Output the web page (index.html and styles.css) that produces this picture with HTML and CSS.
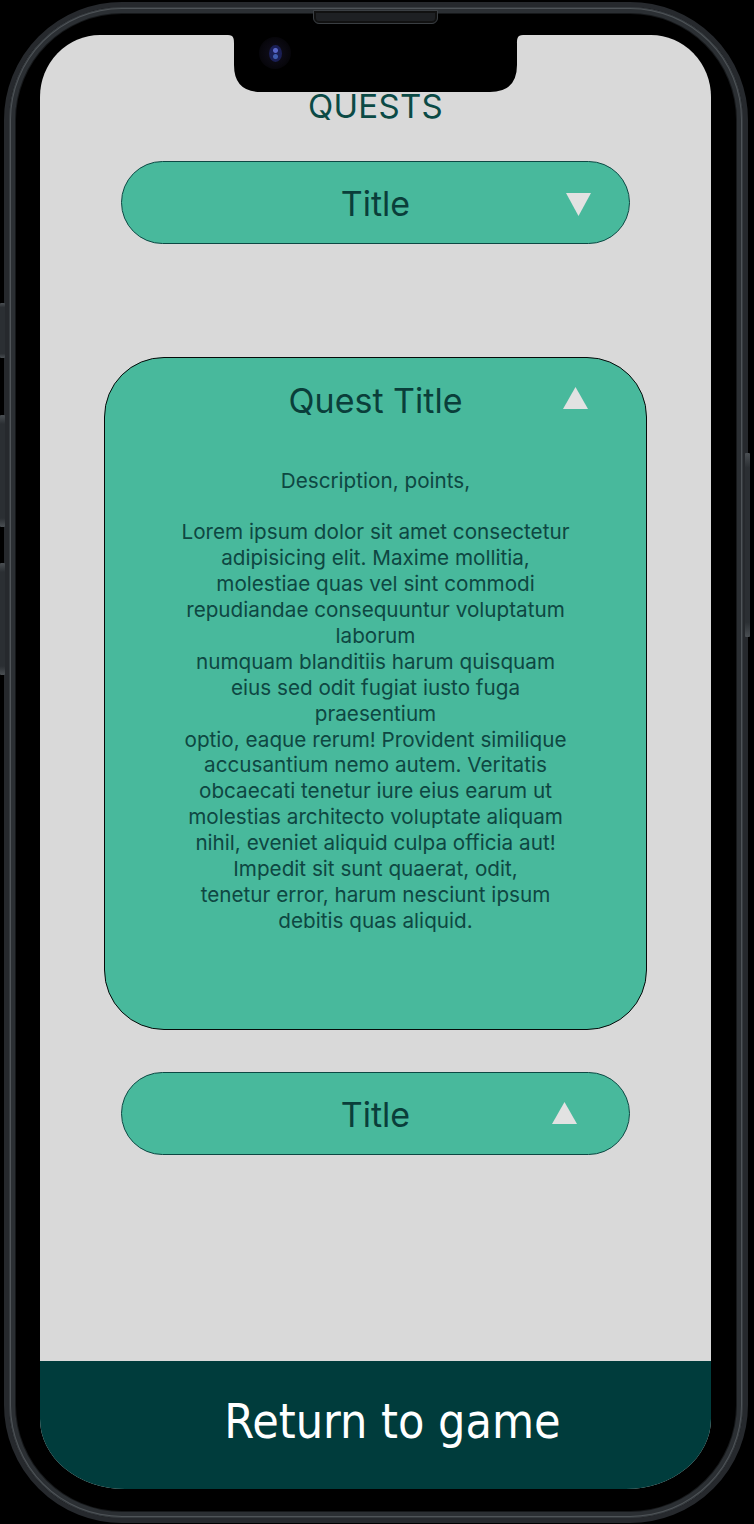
FILE: index.html
```html
<!DOCTYPE html>
<html lang="en">
<head>
<meta charset="utf-8">
<title>Quests</title>
<link rel="stylesheet" href="styles.css">
</head>
<body>
<div class="phone">
  <span class="side-btn side-btn--l1"></span>
  <span class="side-btn side-btn--l2"></span>
  <span class="side-btn side-btn--l3"></span>
  <span class="side-btn side-btn--r1"></span>
  <span class="speaker"></span>
  <div class="screen">
    <svg class="notch" width="295" height="57" viewBox="0 0 295 57" aria-hidden="true">
      <path d="M0 0 H295 C289 0 289 4 289 9 V30 Q289 57 262 57 H33 Q6 57 6 30 V9 C6 4 6 0 0 0 Z" fill="#000"/>
    </svg>
    <span class="camera"><span class="lens"></span></span>

    <h1 class="title">QUESTS</h1>

    <div class="pill pill--down">
      <span></span>
      <span class="pill-label">Title</span>
      <svg class="tri" width="25" height="23" viewBox="0 0 25 23"><polygon points="0,0 25,0 12.5,23" fill="#e2e2e2"/></svg>
    </div>

    <div class="card">
      <div class="card-head">
        <span></span>
        <span class="card-title">Quest Title</span>
        <svg class="tri tri--card" width="25" height="22" viewBox="0 0 25 22"><polygon points="12.5,0 25,22 0,22" fill="#e2e2e2"/></svg>
      </div>
      <p class="desc">Description, points,<br><br>Lorem ipsum dolor sit amet consectetur<br>adipisicing elit. Maxime mollitia,<br>molestiae quas vel sint commodi<br>repudiandae consequuntur voluptatum<br>laborum<br>numquam blanditiis harum quisquam<br>eius sed odit fugiat iusto fuga<br>praesentium<br>optio, eaque rerum! Provident similique<br>accusantium nemo autem. Veritatis<br>obcaecati tenetur iure eius earum ut<br>molestias architecto voluptate aliquam<br>nihil, eveniet aliquid culpa officia aut!<br>Impedit sit sunt quaerat, odit,<br>tenetur error, harum nesciunt ipsum<br>debitis quas aliquid.</p>
    </div>

    <div class="pill pill--up">
      <span></span>
      <span class="pill-label">Title</span>
      <svg class="tri" width="25" height="22" viewBox="0 0 25 22"><polygon points="12.5,0 25,22 0,22" fill="#e2e2e2"/></svg>
    </div>

    <div class="bottom-bar">Return to game</div>
  </div>
</div>
</body>
</html>
```

FILE: styles.css
```css
* { box-sizing: border-box; }

html, body {
  margin: 0;
  padding: 0;
  background: #000;
}

body {
  width: 754px;
  height: 1524px;
  overflow: hidden;
}

.phone {
  position: relative;
  width: 744px;
  height: 1521px;
  margin: 2px 6px 1px 4px;
  border: 5px solid #26292d;
  border-radius: 118px;
  padding: 28px 32px 29px 31px;
  background: #000;
  box-shadow: inset 0 0 0 1px #363b3f, inset 0 0 0 2px #4f5458, inset 0 0 0 6px #2b2f33, inset 0 0 0 7px #16181a;
}

.side-btn {
  position: absolute;
  width: 5px;
  background: linear-gradient(#4a4f53, #2b2f33 8%, #2b2f33 92%, #4a4f53);
  border-radius: 1px;
}
.side-btn--l1 { left: -9px; top: 296px; height: 55px; }
.side-btn--l2 { left: -9px; top: 408px; height: 112px; }
.side-btn--l3 { left: -9px; top: 556px; height: 112px; }
.side-btn--r1 { right: -7px; top: 446px; height: 184px; }

.speaker {
  position: absolute;
  top: 3px;
  left: 304px;
  width: 125px;
  height: 14px;
  border-radius: 0 0 6px 6px;
  background: #1e2023;
  border: 1px solid #3a3e42;
  box-shadow: inset 0 0 0 2px #111;
}

.screen {
  position: relative;
  width: 671px;
  height: 1454px;
  background: #d9d9d9;
  border-radius: 60px 60px 85px 85px / 62px 62px 70px 70px;
  overflow: hidden;
  display: flex;
  flex-direction: column;
  align-items: center;
  font-family: Inter, "Noto Sans", sans-serif;
}

.notch {
  position: absolute;
  top: 0;
  left: 188px;
  display: block;
}

.camera {
  position: absolute;
  top: 2px;
  left: 219px;
  width: 32px;
  height: 32px;
  border-radius: 50%;
  background: radial-gradient(circle, #110f1e 0%, #08070d 60%, #000 100%);
  display: flex;
  align-items: center;
  justify-content: center;
}
.lens {
  width: 13px;
  height: 17px;
  border-radius: 50%;
  background:
    radial-gradient(circle at 50% 32%, #5866c8 0 2px, transparent 3px),
    radial-gradient(circle at 50% 68%, #3f5cb0 0 2px, transparent 3px),
    #1a1f55;
}

.title {
  margin: 0;
  padding-top: 51px;
  font-size: 33px;
  line-height: 40px;
  font-weight: 400;
  color: #0b4a45;
  letter-spacing: 0.3px;
}

.pill {
  width: 509px;
  height: 83px;
  margin-top: 35px;
  border: 1px solid #0c4843;
  border-radius: 42px;
  background: #48b99c;
  display: grid;
  grid-template-columns: 1fr auto 1fr;
  align-items: center;
  padding: 2px 38px 0;
}
.pill--up {
  margin-top: 42px;
  padding-right: 52px;
  padding-left: 52px;
}

.pill-label,
.card-title {
  font-size: 34px;
  line-height: 41px;
  color: #0a3e3a;
}

.tri {
  justify-self: end;
  align-self: start;
  display: block;
}
.pill--down .tri { margin-top: 29px; }
.pill--up .tri { margin-top: 27px; }

.card {
  width: 543px;
  height: 673px;
  margin-top: 113px;
  border: 1.5px solid #050a09;
  border-radius: 60px;
  background: #48b99c;
  padding-top: 22px;
}

.card-head {
  display: grid;
  grid-template-columns: 1fr auto 1fr;
  align-items: center;
  padding: 0 58px;
}
.tri--card { margin-top: 6.5px; }

.desc {
  margin: 46.5px 0 0;
  text-align: center;
  white-space: nowrap;
  font-size: 20.7px;
  line-height: 25.9px;
  color: #0e4742;
}

.bottom-bar {
  margin-top: auto;
  width: 100%;
  height: 128px;
  background: #003c3c;
  color: #fff;
  text-align: center;
  padding: 32px 0 0 34px;
  font-family: "DejaVu Sans Condensed", "DejaVu Sans", sans-serif;
  font-stretch: condensed;
  font-size: 48px;
  line-height: 56px;
  font-weight: 400;
}
```
